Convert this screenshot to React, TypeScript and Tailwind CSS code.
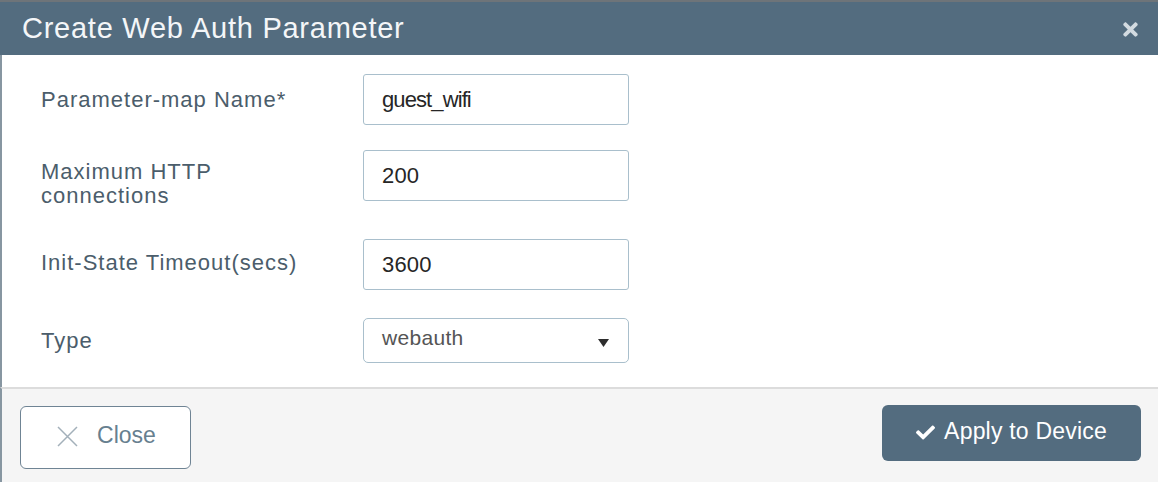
import { FaCheck, FaTimes } from "react-icons/fa";

const font = { fontFamily: '"Liberation Sans", Arial, sans-serif' };

function Field({ value, tight }: { value: string; tight?: boolean }) {
  return (
    <div
      className={
        "w-[266px] h-[51px] border border-[#a9bfcc] rounded-[3px] flex items-center pl-[18px] text-[22px] text-[#262626] " +
        (tight ? "tracking-[-0.9px]" : "tracking-[0.2px]")
      }
    >
      {value}
    </div>
  );
}

export default function App() {
  return (
    <div className="w-[1158px] h-[482px] flex flex-col bg-white border-t-2 border-[#6e7479]" style={font}>
      <div className="h-[53px] bg-[#536c7f] flex items-center justify-between pl-[22px] pr-[17px]">
        <span className="text-[29px] text-[#f4f6f8] tracking-[0.75px] leading-none">Create Web Auth Parameter</span>
        <FaTimes className="text-[#d3dbe1] w-[21px] h-[21px] mt-[1px]" />
      </div>

      <div className="flex-1 border-l-2 border-[#8796a1] pl-[39px] pt-[19px] text-[#4b5d6b] text-[22px] tracking-[1px]">
        <div className="flex items-center">
          <div className="w-[322px]">Parameter-map Name*</div>
          <Field value="guest_wifi" tight />
        </div>

        <div className="flex items-start mt-[25px]">
          <div className="w-[322px] leading-[24px] pt-[10px]">
            Maximum HTTP
            <br />
            connections
          </div>
          <Field value="200" />
        </div>

        <div className="flex items-center mt-[31px]">
          <div className="w-[322px] -mt-[4px]">Init-State Timeout(secs)</div>
          <Field value="3600" />
        </div>

        <div className="flex items-center mt-[28px]">
          <div className="w-[322px]">Type</div>
          <div className="w-[266px] h-[45px] border border-[#a9bfcc] rounded-[5px] flex items-center justify-between pl-[18px] pr-[19px] text-[21px] text-[#555] tracking-[0.3px]">
            <span className="-mt-[6px]">webauth</span>
            <svg width="11" height="8" viewBox="0 0 11 8" className="mt-[4px]">
              <path d="M0 0 H11 L5.5 8 Z" fill="#2d2d2d" />
            </svg>
          </div>
        </div>
      </div>

      <div className="h-[95px] bg-[#f5f5f5] border-t-2 border-[#dcdcdc] border-l-2 border-l-[#8796a1] flex justify-between items-start pt-[17px] pl-[18px] pr-[17px]">
        <button className="w-[171px] h-[63px] bg-white border-[1.5px] border-[#6f8494] rounded-[6px] flex items-center justify-center gap-[19px] text-[23px] text-[#67808f] pl-[2px] pb-[4px]">
          <svg width="21" height="21" viewBox="0 0 21 21" className="mt-[2px]">
            <path d="M1 1 L20 20 M20 1 L1 20" stroke="#a3b0ba" strokeWidth="1.5" />
          </svg>
          <span>Close</span>
        </button>
        <button className="w-[259px] h-[56px] bg-[#536c7f] rounded-[6px] flex items-center justify-center gap-[9px] text-[23px] text-white tracking-[0.2px] -mt-[1px] pb-[4px]">
          <FaCheck className="w-[19px] h-[19px] mt-[2px]" />
          <span>Apply to Device</span>
        </button>
      </div>
    </div>
  );
}
